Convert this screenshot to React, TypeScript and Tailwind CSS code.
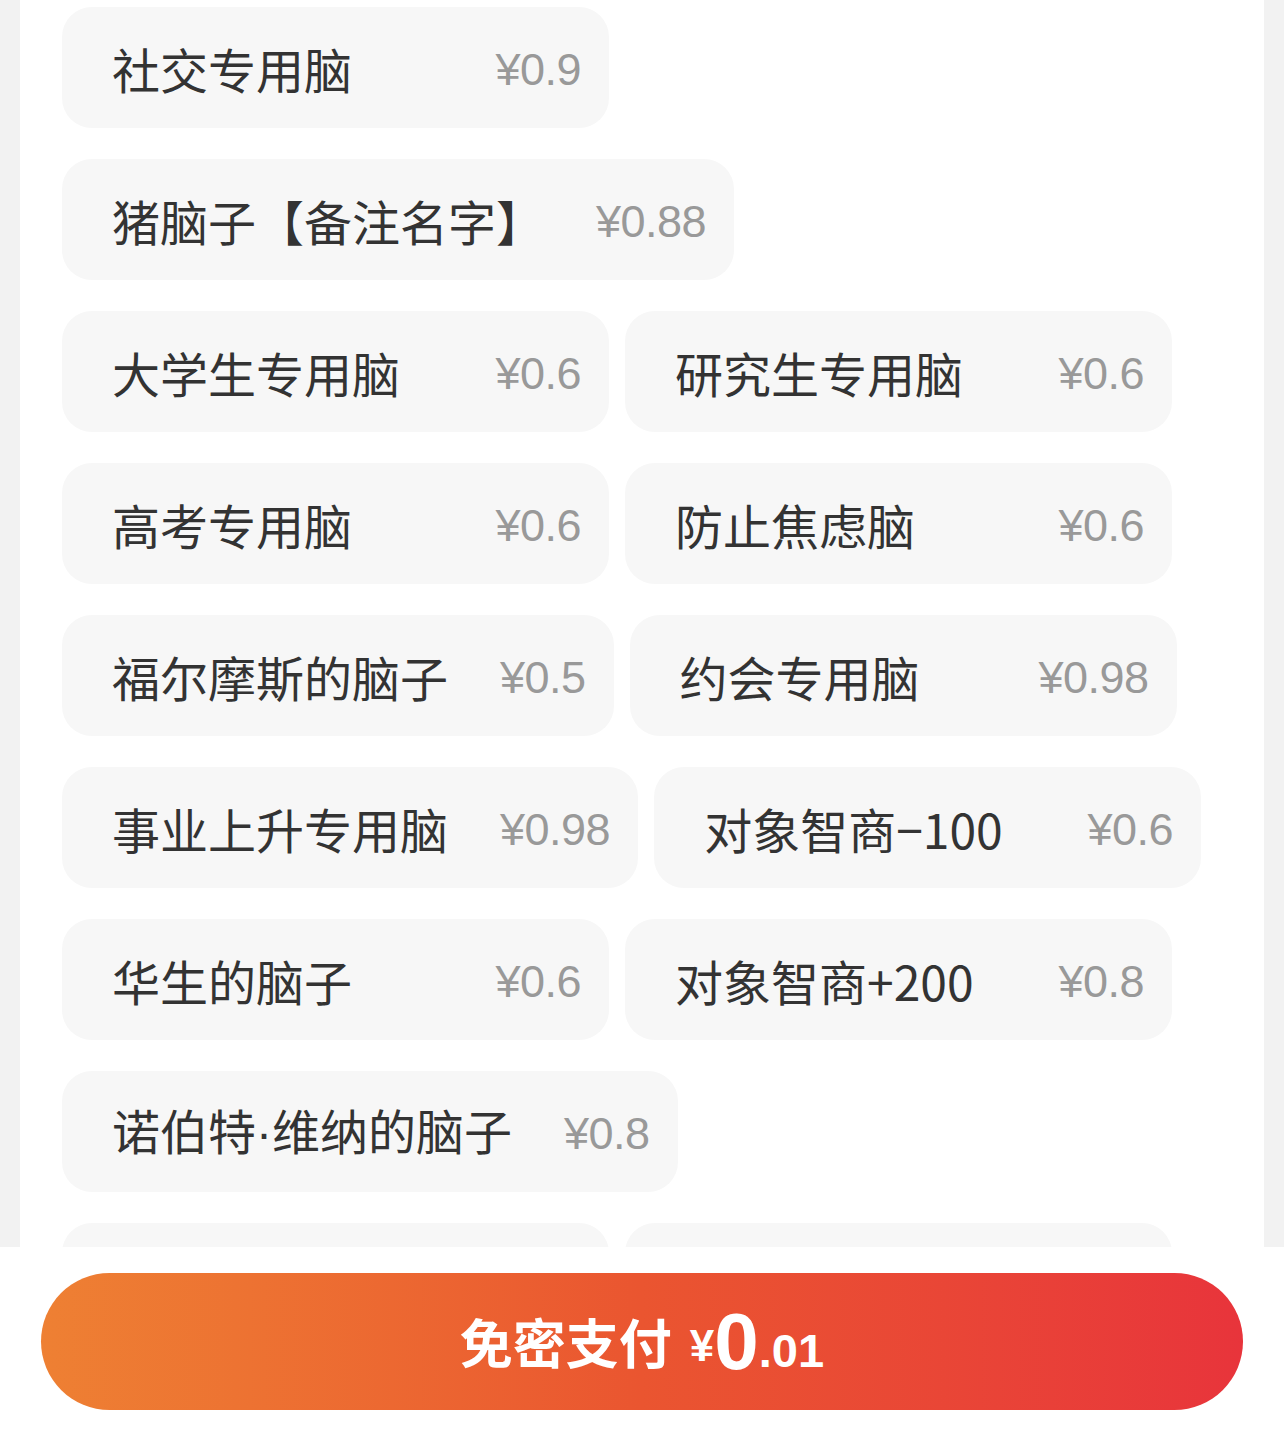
// @ts-nocheck
const rows = [
  [["社交专用脑", "¥0.9"]],
  [["猪脑子【备注名字】", "¥0.88"]],
  [["大学生专用脑", "¥0.6"], ["研究生专用脑", "¥0.6"]],
  [["高考专用脑", "¥0.6"], ["防止焦虑脑", "¥0.6"]],
  [["福尔摩斯的脑子", "¥0.5"], ["约会专用脑", "¥0.98"]],
  [["事业上升专用脑", "¥0.98"], ["对象智商−100", "¥0.6"]],
  [["华生的脑子", "¥0.6"], ["对象智商+200", "¥0.8"]],
  [["诺伯特·维纳的脑子", "¥0.8"]],
  [["", ""], ["", ""]],
];

// the middle dot should stay narrow, so it gets the latin face
function Name({ text }) {
  const parts = text.split("·");
  return (
    <span className="text-[48px] leading-none text-[#333] whitespace-nowrap font-['Noto_Sans_CJK_SC','Noto_Sans',sans-serif]">
      {parts.map((p, i) => (
        <span key={i}>
          {i > 0 && <span className="font-['Liberation_Sans',Arial,sans-serif]">·</span>}
          {p}
        </span>
      ))}
    </span>
  );
}

function Chip({ name, price }) {
  return (
    <div className="flex items-center justify-between h-[121px] min-w-[547px] rounded-[30px] bg-[#f7f7f7] pl-[50px] pr-[28px]">
      <Name text={name} />
      <span className="ml-[52px] pt-1 text-[45px] tracking-[-0.5px] leading-none text-[#999] whitespace-nowrap font-['Liberation_Sans',Arial,sans-serif]">
        {price}
      </span>
    </div>
  );
}

export default function App() {
  return (
    <div className="w-full h-[1436px] flex flex-col bg-[#f2f2f2] overflow-hidden">
      {/* options list */}
      <div className="mx-5 h-[1247px] bg-white overflow-hidden px-[42px] pt-[7px] flex flex-col gap-[31px]">
        {rows.map((row, i) => (
          <div key={i} className="flex gap-4">
            {row.map(([n, p], j) => <Chip key={j} name={n} price={p} />)}
          </div>
        ))}
      </div>

      {/* pay bar */}
      <div className="flex-1 bg-white px-[41px] pt-[26px]">
        <button className="w-full h-[137px] rounded-full bg-gradient-to-r from-[#ee8033] via-[#ea5530] to-[#e8343b] flex items-center justify-center text-white font-bold leading-none">
          <span className="text-[53px] font-['Noto_Sans_CJK_SC','Noto_Sans',sans-serif]">免密支付</span>
          <span className="ml-[18px] pt-2 text-[44px] font-['Liberation_Sans',Arial,sans-serif]">¥</span>
          <span className="text-[80px] font-['Liberation_Sans',Arial,sans-serif]">0</span>
          <span className="pt-[18px] text-[47px] font-['Liberation_Sans',Arial,sans-serif]">.01</span>
        </button>
      </div>
    </div>
  );
}
